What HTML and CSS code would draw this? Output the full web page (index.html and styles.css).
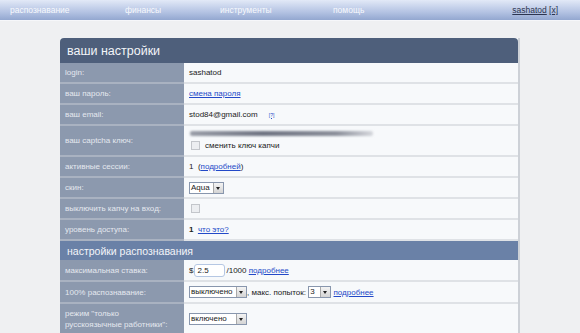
FILE: index.html
```html
<!DOCTYPE html>
<html>
<head>
<meta charset="utf-8">
<link rel="stylesheet" href="styles.css">
</head>
<body>
<div class="nav">
  <a class="nav-item" href="#">распознавание</a>
  <a class="nav-item" href="#">финансы</a>
  <a class="nav-item" href="#">инструменты</a>
  <a class="nav-item" href="#">помощь</a>
  <span class="nav-spacer"></span>
  <a class="nav-user" href="#">sashatod</a>&nbsp;<a class="nav-user" href="#">[x]</a>
</div>
<div class="panel">
  <div class="panel-head">ваши настройки</div>
  <div class="row"><div class="lbl">login:</div><div class="val">sashatod</div></div>
  <div class="row"><div class="lbl">ваш пароль:</div><div class="val"><a href="#" class="lnk">смена пароля</a></div></div>
  <div class="row"><div class="lbl">ваш email:</div><div class="val">stod84@gmail.com <a href="#" class="lnk tiny">[?]</a></div></div>
  <div class="row tall"><div class="lbl">ваш captcha ключ:</div>
    <div class="val col">
      <div class="blur"></div>
      <label class="chk-line"><span class="chk"></span>сменить ключ капчи</label>
    </div>
  </div>
  <div class="row"><div class="lbl">активные сессии:</div><div class="val">1&nbsp;&nbsp;(<a href="#" class="lnk">подробней</a>)</div></div>
  <div class="row"><div class="lbl">скин:</div><div class="val"><span class="sel w34"><span class="sel-txt">Aqua</span><span class="sel-btn"></span></span></div></div>
  <div class="row"><div class="lbl">выключить капчу на вход:</div><div class="val"><span class="chk"></span></div></div>
  <div class="row"><div class="lbl">уровень доступа:</div><div class="val"><b>1</b>&nbsp;&nbsp;<a href="#" class="lnk">что это?</a></div></div>
  <div class="section">настройки распознавания</div>
  <div class="row r22"><div class="lbl">максимальная ставка:</div><div class="val">$<span class="inp">2.5</span>/1000&nbsp;<a href="#" class="lnk">подробнее</a></div></div>
  <div class="row r22"><div class="lbl">100% распознавание:</div><div class="val"><span class="sel w57"><span class="sel-txt">выключено</span><span class="sel-btn"></span></span>, макс. попыток:&nbsp;<span class="sel w23"><span class="sel-txt">3</span><span class="sel-btn"></span></span>&nbsp;<a href="#" class="lnk">подробнее</a></div></div>
  <div class="row big"><div class="lbl">режим "только<br>русскоязычные работники":</div><div class="val"><span class="sel w57"><span class="sel-txt">включено</span><span class="sel-btn"></span></span></div></div>
</div>
</body>
</html>
```
FILE: styles.css
```css
html, body {
  margin: 0;
  padding: 0;
  background: #eff0f2;
  font-family: "Liberation Sans", Arial, sans-serif;
  font-size: 8px;
  color: #222;
}
.nav {
  height: 20px;
  display: flex;
  align-items: center;
  padding: 0 22px 0 10px;
  background: linear-gradient(#e2e9f7, #b4c3e3 60%, #93a7d0);
  border-bottom: 1px solid #f6f7fa;
}
.nav-item {
  color: #f7f9fd;
  text-decoration: none;
  font-size: 8.5px;
}
.nav-item:nth-child(1) { width: 115px; }
.nav-item:nth-child(2) { width: 95px; }
.nav-item:nth-child(3) { width: 113px; }
.nav-spacer { flex: 1; }
.nav-user {
  color: #2c3550;
  text-decoration: underline;
  font-size: 8.5px;
}
.panel {
  margin: 17px 0 0 60px;
  width: 458px;
  background: #f7f9fb;
  box-shadow: 2px 0 0 #cdd1d7;
}
.panel-head {
  height: 25px;
  background: #4e5f7b;
  border-radius: 4px 4px 0 0;
  color: #f3f5f9;
  font-size: 12.5px;
  display: flex;
  align-items: center;
  padding-left: 7px;
  box-sizing: border-box;
  padding-top: 1px;
}
.row {
  display: flex;
  min-height: 21px;
  box-sizing: border-box;
  border-bottom: 2px solid #dfe2e6;
}
.row.tall { min-height: 31px; }
.row.r22 { min-height: 22px; }
.row.big { min-height: 32px; }
.lbl {
  width: 124px;
  flex: none;
  background: #8c99ae;
  color: #e4e8ee;
  padding: 0 5px;
  box-sizing: border-box;
  display: flex;
  align-items: center;
  line-height: 11px;
  margin-bottom: -2px;
  border-bottom: 2px solid #a9b2c1;
}
.val {
  flex: 1;
  padding: 0 5px;
  display: flex;
  align-items: center;
  white-space: pre;
}
.val.col {
  flex-direction: column;
  align-items: flex-start;
  justify-content: center;
  gap: 5px;
}
.lnk {
  color: #2349c8;
  text-decoration: underline;
}
.tiny {
  font-size: 5px;
  margin-left: 9px;
}
.blur {
  width: 183px;
  height: 5px;
  background: linear-gradient(90deg, #9a9ea8, #6f7482 40%, #8c909b 80%, #d6d8dd);
  filter: blur(1px);
  border-radius: 2px;
  margin-left: 1px;
}
.chk-line {
  display: flex;
  align-items: center;
}
.chk {
  display: inline-block;
  width: 7px;
  height: 7px;
  border: 1px solid #c3c6cb;
  background: #eceef1;
  margin: 0 5px 0 2px;
}
.sel {
  display: inline-flex;
  align-items: stretch;
  height: 12px;
  box-sizing: border-box;
  border: 1px solid #8896ad;
  background: #fff;
}
.w34 { width: 35px; }
.w57 { width: 58px; }
.w23 { width: 23px; }
.sel-txt {
  flex: 1;
  padding-left: 1px;
  line-height: 10px;
  font-size: 8px;
  color: #222;
}
.sel-btn {
  width: 9px;
  background: linear-gradient(#f4f4f4, #d4d4d4);
  border-left: 1px solid #a9a9a9;
  position: relative;
}
.sel-btn::after {
  content: "";
  position: absolute;
  left: 2px;
  top: 4px;
  border-left: 2.5px solid transparent;
  border-right: 2.5px solid transparent;
  border-top: 3px solid #222;
}
.inp {
  display: inline-block;
  width: 31px;
  height: 13px;
  box-sizing: border-box;
  border: 1px solid #b5c7e3;
  border-radius: 3px;
  background: #fff;
  padding-left: 2px;
  line-height: 11px;
  margin: 0 1px 0 1px;
}
.section {
  height: 19px;
  background: #6a81a7;
  color: #f3f5f9;
  font-size: 10.5px;
  display: flex;
  align-items: center;
  padding-left: 7px;
  box-sizing: border-box;
}
```
